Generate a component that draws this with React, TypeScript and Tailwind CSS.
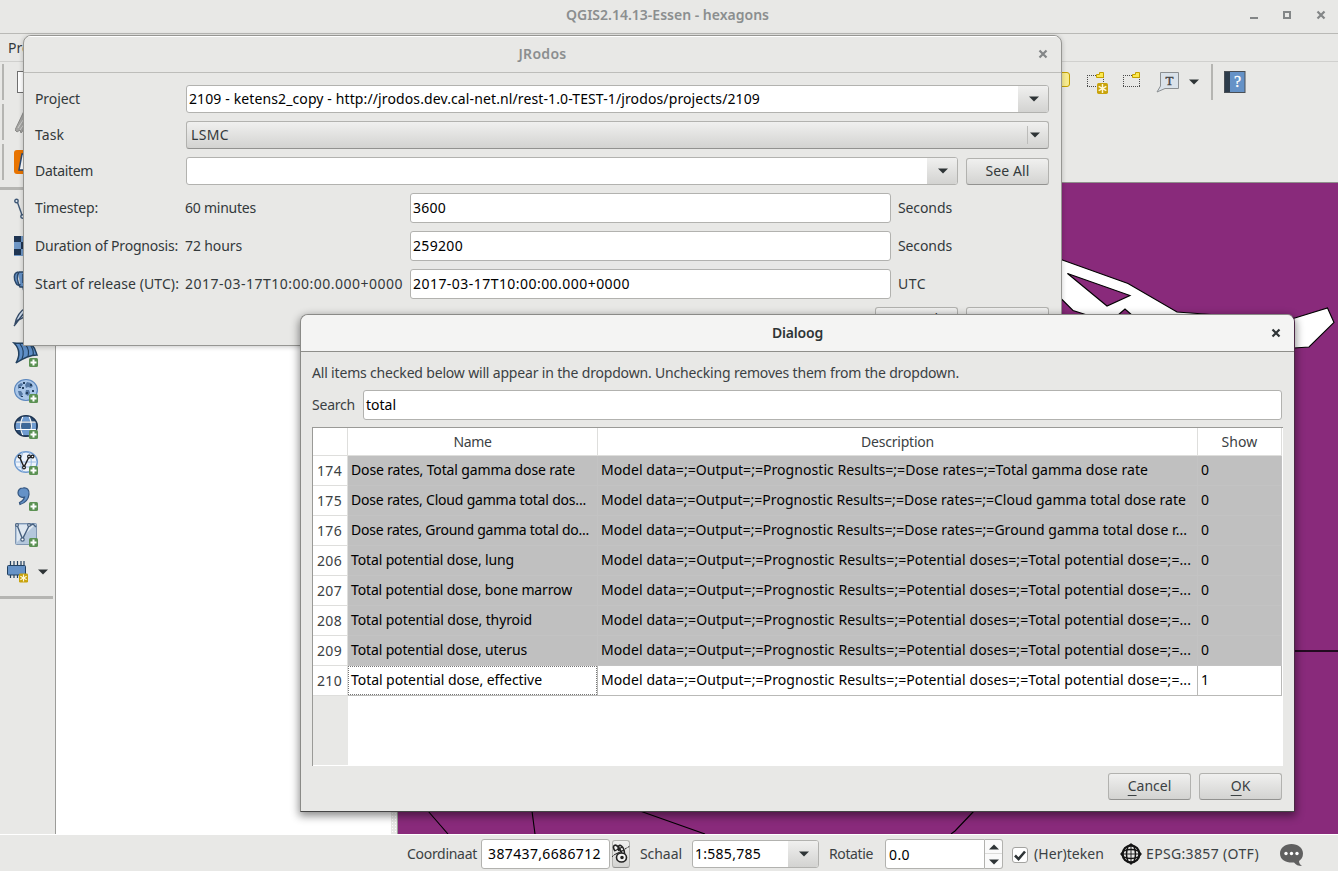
import React, { useLayoutEffect, useRef, useState } from "react";

/** Text tracked so that it fills a given advance width. */
function Fit({ w, children, className = "" }: { w: number; children: string; className?: string }) {
  const ref = useRef<HTMLSpanElement>(null);
  const [ls, setLs] = useState(0);
  useLayoutEffect(() => {
    if (ref.current) {
      const natural = ref.current.getBoundingClientRect().width - ls * children.length;
      setLs((w - natural) / children.length);
    }
  }, [w, children]);
  return (
    <span ref={ref} className={`inline-block whitespace-pre ${className}`} style={{ letterSpacing: `${ls}px` }}>
      {children}
    </span>
  );
}

const Arrow = ({ up = false }: { up?: boolean }) => (
  <svg width="10" height="6" viewBox="0 0 10 6" className="shrink-0">
    <path d={up ? "M0 5.5L5 .5l5 5z" : "M0 .5h10L5 5.5z"} fill="#2e3436" />
  </svg>
);

const Cross = ({ color }: { color: string }) => (
  <svg width="10" height="10" viewBox="0 0 10 10" className="shrink-0">
    <path d="M1.5 1.5l7 7M8.500 1.500l-7 7" stroke={color} strokeWidth="2.2" />
  </svg>
);

const Plus = () => (
  <g>
    <rect x="15" y="15" width="9" height="9" rx="1.5" fill="#5b9153" stroke="none" />
    <path d="M19.500 16.500v6M16.500 19.500h6" stroke="#fff" strokeWidth="2" />
  </g>
);

const Star = ({ x, y, s = 10 }: { x: number; y: number; s?: number }) => (
  <g transform={`translate(${x} ${y}) scale(${s / 10})`}>
    <rect width="10" height="10" rx="1.500" fill="#c9a30c" />
    <path d="M5 1v8M1.500 3l7 4M8.500 3l-7 4" stroke="#fff8d8" strokeWidth="1.300" />
  </g>
);

const buttonLook =
  "rounded-[3px] border border-[#b2b2af] border-b-[#929290] bg-linear-to-b from-[#f0f0ef] to-[#d3d3d1]";

function Button({ children }: { children: React.ReactNode }) {
  return <div className={`flex h-[27px] w-[83px] shrink-0 items-center justify-center pb-px ${buttonLook}`}>{children}</div>;
}

function Combo({ children, className = "" }: { children?: React.ReactNode; className?: string }) {
  return (
    <div className={`flex h-[28px] shrink-0 overflow-hidden rounded-[3px] border border-[#b2b2af] bg-white text-black ${className}`}>
      <div className="flex grow items-center pl-[2px]">{children}</div>
      <div className="flex w-[30px] items-center justify-center bg-linear-to-b from-[#f0f0ef] to-[#d3d3d1] pl-[2px]">
        <Arrow />
      </div>
    </div>
  );
}

function Field({ children, className = "pl-[2px]" }: { children: React.ReactNode; className?: string }) {
  return (
    <div className={`flex h-[30px] shrink-0 items-center rounded-[3px] border border-[#b2b2af] bg-white text-black ${className}`}>
      {children}
    </div>
  );
}

const sideIcons: React.ReactNode[] = [
  <g fill="#e8eef5" stroke="#3f5876" strokeWidth="1.400">
    <path d="M3 2l5 14" />
    <circle cx="2.500" cy="2" r="1.700" />
    <circle cx="8.500" cy="17.500" r="1.700" />
    <path d="M10 18l12-6" />
  </g>,
  <g>
    <rect y="1" width="22" height="20" fill="#6f97c6" />
    <path d="M0 1h7v6H0zM7 7h8v7H7zM0 14h7v6H0zM15 1h7v6h-7z" fill="#1f3552" />
  </g>,
  <g fill="#6592c7" stroke="#2b4768" strokeWidth="1.500">
    <path d="M4 1C-1 2 0 9 2 12c1 3 4 3 4 1M5 1h12c5 1 5 12 0 12h-3v6c-3 3-5 0-5-3H6C3 10 3 4 5 1z" />
    <path d="M9 3v9" />
  </g>,
  <g fill="#cfdcec" stroke="#344a66" strokeWidth="1.400">
    <path d="M1 17C2 11 6 4 13 0l3 1C14 7 9 12 4 13z" />
    <path d="M0 19L10 6" />
  </g>,
  <g>
    <path d="M0 0c8 1 14-1 18 2 4 4 4 8 5 10-8 0-15 4-21 8C6 13 6 6 0 0z" fill="#5f8fc8" stroke="#22405f" strokeWidth="1.500" />
    <path d="M6 1c4 5 4 10 2 15M11 1c4 5 4 8 3 13M16 1.500c3 4 4 7 3 11" fill="none" stroke="#22405f" strokeWidth="1.200" />
    <Plus />
  </g>,
  <g>
    <ellipse cx="12" cy="11" rx="11.400" ry="10.500" fill="#a9c6e8" stroke="#5a86bd" strokeWidth="1.200" />
    <path d="M4 6l3-2 2 1-1 2-2 1-2 2zM13 3l4 1 2 3-2 2-3-1-2 1-1-3zM4 12l3 0 2 3-2 3-2-2zM12 11l3 0 1 3-2 3-3-2z" fill="#5579a5" />
    <path d="M9 3h2v2H9zM16 5h2v2h-2zM8 8h2v2H8zM12 13h2v2h-2zM18 11h2v2h-2zM5 8h2v1H5zM7 17h2v1H7z" fill="#24405f" />
    <Plus />
  </g>,
  <g>
    <ellipse cx="12" cy="11" rx="11.500" ry="10.500" fill="#2a4a70" />
    <path d="M8 1.500h8v5H8zM1.500 8h5.500v6H1.500zM8 15h8v5H8zM17 8h5v6h-5z" fill="#6f9bd0" />
    <path d="M8 8h8v6H8z" fill="#3d6899" />
    <path d="M1 7.200h22M1 14.500h22M9 1C6 7 6 15 9 21M15 1c3 6 3 14 0 20" fill="none" stroke="#fff" strokeWidth="1.200" />
    <ellipse cx="12" cy="11" rx="11.300" ry="10.300" fill="none" stroke="#1f3552" strokeWidth="1.300" />
    <Plus />
  </g>,
  <g>
    <ellipse cx="12" cy="11" rx="11.300" ry="10.300" fill="#eef3fa" stroke="#6f9bd0" strokeWidth="1.400" />
    <path d="M1 11h22M3 16h18M9 1C6 7 6 15 9 21M15 1c3 6 3 14 0 20" fill="none" stroke="#9dbde2" strokeWidth="1.200" />
    <path d="M5.500 6l4.500 10 5-10h4" fill="none" stroke="#1e1e1e" strokeWidth="1.400" />
    <g fill="#fff" stroke="#1e1e1e" strokeWidth="1.200">
      <circle cx="5.500" cy="5.500" r="1.400" />
      <circle cx="10" cy="16.500" r="1.400" />
      <circle cx="15" cy="5.500" r="1.400" />
      <circle cx="18.500" cy="5.500" r="1.400" />
    </g>
    <Plus />
  </g>,
  <g>
    <path d="M9 1c4-1 6.500 2 6 6.500C14.500 12 11 16 6 17.500l-.500-2C9 14 10 12 10.500 10 7 11 4 9 4 6c0-3 2-5 5-5z" fill="#6592c7" stroke="#33557f" strokeWidth="1.200" />
    <Plus />
  </g>,
  <g>
    <rect x="1.500" y=".5" width="21" height="21" rx="1" fill="#b4c7dc" stroke="#7f96b2" />
    <path d="M3 2h18L3 19z" fill="#dfe8f1" />
    <path d="M3 2l5.500 14L15 3l4-2 3 3" fill="none" stroke="#46607f" strokeWidth="1.400" />
    <g fill="#fff" stroke="#46607f" strokeWidth="1.200">
      <circle cx="3" cy="2" r="1.400" />
      <circle cx="8.500" cy="16.500" r="1.700" />
      <circle cx="15" cy="2" r="1.400" />
    </g>
    <Plus />
  </g>,
];

function DottedBox({ star = false }: { star?: boolean }) {
  return (
    <svg width="23" height="24" viewBox="0 0 23 24" className="shrink-0">
      <g fill="none" stroke="#4a4a4a" strokeDasharray="1 1" shapeRendering="crispEdges">
        <path d="M0 4.500h17M0 15.500h17" />
        <path d="M.5 6v9M16.500 6v9" />
      </g>
      <path d="M9.500 6.500v-3h3v-2h4v5z" fill="#fce94f" stroke="#c4a000" />
      {star && <Star x={10} y={12} s={11} />}
    </svg>
  );
}

const Handle = () => <div className="h-[36px] w-[2px] shrink-0 bg-[#b5b5b2]" />;

function MainToolbars() {
  return (
    <div className="flex h-[120px] shrink-0 flex-col gap-1 pt-[2px] pl-[2px]">
      <div className="flex h-[36px] items-center">
        <Handle />
        <div className="ml-[13px] h-[22px] w-[18px] shrink-0 border border-[#6f6f6f] bg-white" />
        <div className="ml-[1013px] h-[15px] w-[22px] shrink-0 -translate-y-[3px] rounded-[3px] border border-[#c4a000] bg-[#f7eb8f]" />
        <div className="ml-[17px] flex translate-y-px items-center gap-[13px]">
          <DottedBox star />
          <DottedBox />
        </div>
        <svg width="24" height="22" viewBox="0 0 24 22" className="ml-[10px] shrink-0 translate-y-px">
          <path d="M4.500 .5h18v16H9L1 20l3.500-6z" fill="#dae2ea" stroke="#8b8f92" />
          <text x="13.500" y="13" textAnchor="middle" fontFamily="Liberation Serif" fontSize="13" fill="#444" stroke="#444" strokeWidth=".4">T</text>
        </svg>
        <div className="ml-[9px] flex"><Arrow /></div>
        <div className="ml-[12px]"><Handle /></div>
        <svg width="22" height="22" viewBox="0 0 22 22" className="ml-[11px] shrink-0">
          <rect x=".5" y=".5" width="20.500" height="21" fill="#6592c7" stroke="#4a4f55" />
          <rect x="1" y="1" width="5" height="20" fill="#2d3c4b" />
          <text x="13.500" y="16" textAnchor="middle" fontFamily="Liberation Serif" fontSize="16" fill="#fff" stroke="#fff" strokeWidth=".3">?</text>
        </svg>
      </div>
      <div className="flex h-[36px] items-center">
        <Handle />
        <svg width="22" height="26" viewBox="0 0 22 26" className="ml-[11px] shrink-0">
          <path d="M0 21L9 2l8-2v10L6 24l-1-3-3 2z" fill="#a5a5a3" stroke="#8a8a88" />
          <path d="M3 19l9-14M5 21l9-13" stroke="#d0d0ce" />
        </svg>
      </div>
      <div className="flex h-[36px] items-center">
        <Handle />
        <svg width="24" height="24" viewBox="0 0 24 24" className="ml-[10px] shrink-0">
          <rect width="24" height="24" rx="3" fill="#e87400" />
          <path d="M8 4h12v16H5z" fill="#fff" stroke="#2b4a74" strokeWidth="1.500" />
        </svg>
      </div>
    </div>
  );
}

function SideDock() {
  return (
    <div className="flex w-[56px] shrink-0 flex-col border-r border-[#9c9c99] pt-[5px]">
      <div className="mb-[3px] h-[3px] w-[53px] bg-[#b5b5b2]" />
      {sideIcons.map((icon, i) => (
        <div key={i} className="flex h-[36px] items-center pl-[14px]">
          <svg width="25" height="24" viewBox="0 0 25 24" className="overflow-visible">{icon}</svg>
        </div>
      ))}
      <div className="flex h-[37px] items-center pl-[7px]">
        <svg width="22" height="22" viewBox="0 0 22 22">
          <path d="M3.500 0v17M7 0v17M10.500 0v17M14 0v17M17 0v17" stroke="#22405f" strokeWidth="1.200" />
          <rect x=".5" y="4.500" width="18" height="9.500" rx="1" fill="#6592c7" stroke="#22405f" />
          <Star x={12} y={12.5} s={9} />
        </svg>
        <div className="ml-[9px] flex"><Arrow /></div>
      </div>
      <div className="mt-[6px] h-[3px] w-[53px] bg-[#b5b5b2]" />
    </div>
  );
}

function MapCanvas() {
  return (
    <div className="grow overflow-hidden border-t border-[#8f8f8c] bg-[#892a7b]">
      <svg width="940" height="651" viewBox="398 183 940 651" stroke="#000" strokeWidth="1.100" fill="none">
        <path d="M1040 252L1061 259.500 1128 283.500 1177 312 1211 314.500 1290 319.500 1327.500 308 1334 322.500 1309 347 1294 348 1200 345 1087 315 1073 310.500 1061 298.500 1040 280z" fill="#fff" />
        <path d="M1067.500 273.500L1130 295.500 1107 306zM1110 322L1125 309l16 14z" fill="#892a7b" />
        <path d="M1290 651h48" strokeWidth="1.600" />
        <path d="M428 811l20 23M532 811l3 23M640 811l65 23M974 811l-19 20-4 3" />
      </svg>
    </div>
  );
}

function StatusBar() {
  return (
    <div className="flex h-[37px] shrink-0 items-center border-t border-white pt-[2px] text-[#3b4143]">
      <Fit w={70} className="ml-[407px]">Coordinaat</Fit>
      <Field className="ml-[4px] w-[129px] pl-[6px]"><Fit w={113}>387437,6686712</Fit></Field>
      <div className={`ml-[2px] flex h-[28px] w-[18px] shrink-0 items-center justify-center ${buttonLook}`}>
        <svg width="18" height="22" viewBox="0 0 18 22" className="shrink-0" fill="#f3f3f2" stroke="#222" strokeWidth="1.600">
          <path d="M3 8C0 4 2 1 4.500 2.500S9 8 10 11M7 8C5 4 7 1 9.500 3s3 6 3 8" />
          <path d="M0 14c3-4 5-3 7-2M13 6l5-3" fill="none" strokeWidth="1" strokeDasharray="2 1" />
          <path d="M2.500 8l8-4M4 11l8-4" strokeWidth="1.200" />
          <ellipse cx="9.500" cy="14.500" rx="5" ry="4.500" />
          <circle cx="10" cy="14.500" r="1" fill="#111" />
        </svg>
      </div>
      <Fit w={42} className="ml-[10px]">Schaal</Fit>
      <Combo className="ml-[10px] w-[127px]"><Fit w={66}>1:585,785</Fit></Combo>
      <Fit w={44} className="ml-[10px]">Rotatie</Fit>
      <Field className="ml-[12px] w-[100px] rounded-r-none pt-px pl-[3px]"><Fit w={21}>0.0</Fit></Field>
      <div className="flex h-[30px] w-[18px] shrink-0 flex-col rounded-r-[3px] border border-l-0 border-[#b2b2af] bg-[#fafafa]">
        <div className="flex grow items-center justify-center border-b border-[#dcdcda]"><Arrow up /></div>
        <div className="flex grow items-center justify-center pt-px"><Arrow /></div>
      </div>
      <div className="mt-[2px] ml-[9px] flex size-[16px] shrink-0 items-center justify-center rounded-[3px] border border-[#a3a3a0] bg-white">
        <svg width="12" height="11" viewBox="0 0 12 11" className="shrink-0">
          <path d="M1 5.500L4.500 9 11 1.500" fill="none" stroke="#2e3436" strokeWidth="2.600" />
        </svg>
      </div>
      <Fit w={70} className="ml-[6px]">(Her)teken</Fit>
      <svg width="22" height="22" viewBox="0 0 22 22" className="ml-[16px] shrink-0" fill="none" stroke="#151515">
        <circle cx="11" cy="11" r="8.500" strokeWidth="2" />
        <ellipse cx="11" cy="11" rx="4.500" ry="9.500" strokeWidth="1.500" />
        <ellipse cx="11" cy="11" rx="9.500" ry="4.500" strokeWidth="1.500" />
        <path d="M11 0v22M0 11h22" strokeWidth=".9" />
        <path d="M5 5q6-4 12 0M5 17q6 4 12 0M5 5q-4 6 0 12M17 5q4 6 0 12" strokeWidth="1.200" />
      </svg>
      <Fit w={113} className="ml-[4px]">EPSG:3857 (OTF)</Fit>
      <svg width="24" height="23" viewBox="0 0 24 23" className="mt-[3px] ml-[21px] shrink-0">
        <path d="M11.500 0C18 0 23 4 23 9.500c0 4-2 6-4 7.500 0 3 2 4 3 5-4 0-6-1-8-3.500C6 19 0 16 0 9.500 0 4 5 0 11.500 0z" fill="#606060" />
        <g fill="#fff"><circle cx="6" cy="9.500" r="1.700" /><circle cx="11.500" cy="9.500" r="1.700" /><circle cx="17" cy="9.500" r="1.700" /></g>
      </svg>
    </div>
  );
}

const releaseRows = [
  { label: "Timestep:", lw: 63, text: "60 minutes", tw: 71, value: "3600", vw: 33, unit: "Seconds", uw: 54 },
  { label: "Duration of Prognosis:", lw: 143, text: "72 hours", tw: 57, value: "259200", vw: 50, unit: "Seconds", uw: 54 },
  { label: "Start of release (UTC):", lw: 144, text: "2017-03-17T10:00:00.000+0000", tw: 218, value: "2017-03-17T10:00:00.000+0000", vw: 217, unit: "UTC", uw: 28 },
];

function JRodosWindow() {
  return (
    <section className="absolute top-[35px] left-[23px] flex h-[311px] w-[1039px] flex-col overflow-hidden rounded-t-[8px] border border-[#969693] bg-[#e8e8e6] shadow-[0_1px_5px_rgba(0,0,0,0.22)]">
      <header className="flex h-[37px] shrink-0 items-center border-t border-b border-t-white border-b-[#bdbdba] pr-[13px] pb-[2px] pl-[23px]">
        <div className="grow text-center font-semibold text-[#8b8e8f]"><Fit w={48}>JRodos</Fit></div>
        <Cross color="#838687" />
      </header>
      <div className="flex flex-col gap-2 pt-[12px] pl-[11px] text-[#33393b]">
        <div className="flex items-center">
          <div className="w-[151px]"><Fit w={45}>Project</Fit></div>
          <Combo className="w-[863px]">
            <Fit w={571}>2109 - ketens2_copy - http://jrodos.dev.cal-net.nl/rest-1.0-TEST-1/jrodos/projects/2109</Fit>
          </Combo>
        </div>
        <div className="flex items-center">
          <div className="w-[151px]"><Fit w={29}>Task</Fit></div>
          <div className={`flex h-[28px] w-[863px] items-center pr-[8px] pl-[4px] ${buttonLook}`}>
            <div className="grow"><Fit w={38}>LSMC</Fit></div>
            <div className="mr-[2px] h-[18px] w-px bg-[#bcbcba]" />
            <Arrow />
          </div>
        </div>
        <div className="flex items-center">
          <div className="w-[151px]"><Fit w={58}>Dataitem</Fit></div>
          <Combo className="w-[772px]" />
          <div className="ml-[8px]"><Button><Fit w={44}>See All</Fit></Button></div>
        </div>
        {releaseRows.map((r) => (
          <div key={r.label} className="flex items-center">
            <div className="w-[150px] shrink-0"><Fit w={r.lw}>{r.label}</Fit></div>
            <div className="w-[225px] shrink-0"><Fit w={r.tw}>{r.text}</Fit></div>
            <Field className="w-[481px] pl-[2px]"><Fit w={r.vw}>{r.value}</Fit></Field>
            <Fit w={r.uw} className="ml-[7px]">{r.unit}</Fit>
          </div>
        ))}
        <div className="flex justify-end gap-2 pr-[12px]">
          <Button><Fit w={43} className="-translate-y-px">Cancel</Fit></Button>
          <Button><Fit w={20} className="-translate-y-px">OK</Fit></Button>
        </div>
      </div>
    </section>
  );
}

const P = "Model data=;=Output=;=Prognostic Results=;=";
const rows = [
  { id: "174", name: "Dose rates, Total gamma dose rate", nw: 224, d: P + "Dose rates=;=Total gamma dose rate", dw: 547, show: "0" },
  { id: "175", name: "Dose rates, Cloud gamma total dos...", nw: 235, d: P + "Dose rates=;=Cloud gamma total dose rate", dw: 585, show: "0" },
  { id: "176", name: "Dose rates, Ground gamma total do...", nw: 238, d: P + "Dose rates=;=Ground gamma total dose r...", dw: 586, show: "0" },
  { id: "206", name: "Total potential dose, lung", nw: 163, d: P + "Potential doses=;=Total potential dose=;=...", dw: 590, show: "0" },
  { id: "207", name: "Total potential dose, bone marrow", nw: 221, d: P + "Potential doses=;=Total potential dose=;=...", dw: 590, show: "0" },
  { id: "208", name: "Total potential dose, thyroid", nw: 181, d: P + "Potential doses=;=Total potential dose=;=...", dw: 590, show: "0" },
  { id: "209", name: "Total potential dose, uterus", nw: 176, d: P + "Potential doses=;=Total potential dose=;=...", dw: 590, show: "0" },
  { id: "210", name: "Total potential dose, effective", nw: 191, d: P + "Potential doses=;=Total potential dose=;=...", dw: 590, show: "1" },
];

function ItemTable() {
  const head = "flex items-center justify-center border-r border-b border-[#dededc]";
  return (
    <div className="mt-[7px] flex h-[339px] w-[971px] flex-col border-t border-l border-[#9a9a97] bg-white">
      <div className="grid h-[28px] shrink-0 grid-cols-[35px_250px_600px_84px]">
        <div className={head} />
        <div className={head}><Fit w={38}>Name</Fit></div>
        <div className={head}><Fit w={73}>Description</Fit></div>
        <div className={head}><Fit w={36}>Show</Fit></div>
      </div>
      {rows.map((r) => {
        const on = r.show === "1";
        const cell = `flex items-center border-r border-b pb-px pl-[3px] text-black ${on ? "border-[#b9b9b7]" : "border-[#c3c3c3] bg-[#c0c0c0]"}`;
        return (
          <div key={r.id} className="grid h-[30px] shrink-0 grid-cols-[35px_250px_600px_84px]">
            <div className="flex items-center border-r border-b border-[#dededc] pt-px pl-[4px]"><Fit w={25}>{r.id}</Fit></div>
            <div className={`${cell} relative`}>
              <Fit w={r.nw}>{r.name}</Fit>
              {on && <div className="absolute inset-0 border border-dotted border-[#777]" />}
            </div>
            <div className={cell}><Fit w={r.dw}>{r.d}</Fit></div>
            <div className={cell}><Fit w={8}>{r.show}</Fit></div>
          </div>
        );
      })}
      <div className="mb-px w-[35px] grow bg-[#e8e8e6]" />
    </div>
  );
}

function ItemsWindow() {
  return (
    <section className="absolute top-[314px] left-[300px] flex h-[498px] w-[995px] flex-col overflow-hidden rounded-t-[8px] border border-[#8a8a87] border-r-[#4b2845] border-b-[#454545] bg-[#e8e8e6] shadow-[0_3px_9px_1px_rgba(0,0,0,0.45)]">
      <header className="flex h-[37px] shrink-0 items-center border-b border-[#8e8e8a] bg-[#f4f4f3] pr-[13px] pl-[23px]">
        <div className="grow text-center font-semibold text-[#2e3436]"><Fit w={51}>Dialoog</Fit></div>
        <Cross color="#2e3436" />
      </header>
      <div className="flex flex-col pt-[10px] pl-[11px] text-[#3b4143]">
        <div className="flex h-[22px] items-center">
          <Fit w={647}>All items checked below will appear in the dropdown. Unchecking removes them from the dropdown.</Fit>
        </div>
        <div className="mt-[6px] flex items-center">
          <div className="w-[51px]"><Fit w={43}>Search</Fit></div>
          <Field className="w-[919px] pl-[2px]"><Fit w={30}>total</Fit></Field>
        </div>
        <ItemTable />
        <div className="mt-[7px] flex justify-end gap-2 pr-[12px]">
          <Button><span className="underline underline-offset-[4px]">C</span>ancel</Button>
          <Button><span className="underline underline-offset-[4px]">O</span>K</Button>
        </div>
      </div>
    </section>
  );
}

export default function App() {
  return (
    <div className="relative flex h-[871px] w-[1338px] flex-col overflow-hidden bg-[#e8e8e6] font-['Noto_Sans',sans-serif] text-[14px] leading-[20px] text-[#33393b]">
      <header className="flex h-[34px] shrink-0 items-center border-b border-[#b9b9b6] pr-[12px] pb-[3px] pl-[85px]">
        <div className="grow text-center font-semibold text-[#8b8e8f]"><Fit w={203}>QGIS2.14.13-Essen - hexagons</Fit></div>
        <div className="flex items-center gap-[25px]">
          <div className="mt-[6px] h-[2px] w-[8px] bg-[#838687]" />
          <div className="size-[8px] border-2 border-[#838687]" />
          <Cross color="#838687" />
        </div>
      </header>
      <div className="flex h-[28px] shrink-0 items-center border-b border-[#d0d0ce] pl-[8px]">Project</div>
      <MainToolbars />
      <div className="flex h-[652px] shrink-0">
        <SideDock />
        <div className="w-[335px] shrink-0 bg-white" />
        <div className="w-[7px] shrink-0 border-r border-[#9c9c99] bg-[#e8e8e6] bg-[radial-gradient(#fff_0.8px,transparent_0.9px)] bg-size-[3px_3px]" />
        <MapCanvas />
      </div>
      <StatusBar />
      <JRodosWindow />
      <ItemsWindow />
    </div>
  );
}
